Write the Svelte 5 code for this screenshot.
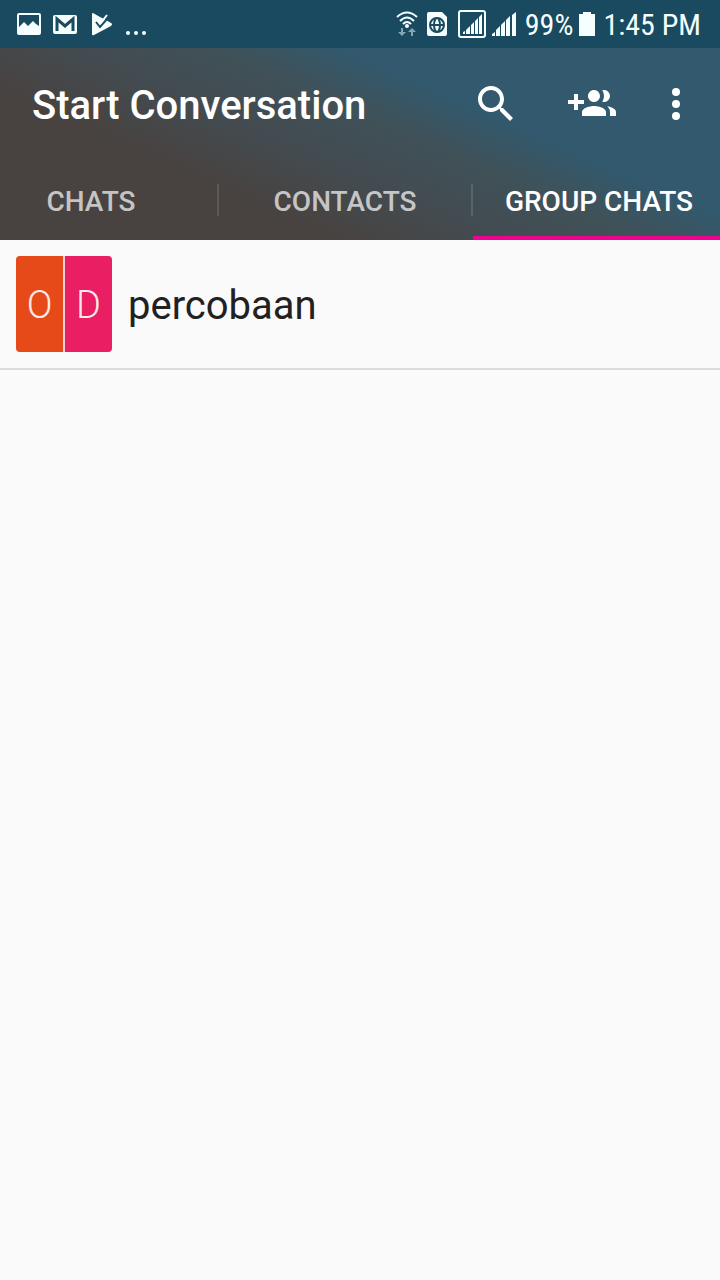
<script>
  let active = $state(2);
  const tabs = ['Chats', 'Contacts', 'Group chats'];
  const groups = [
    {
      name: 'percobaan',
      members: [
        { letter: 'O', color: '#e64a19' },
        { letter: 'D', color: '#e91e63' }
      ]
    }
  ];
</script>

<div class="screen">
  <div class="status">
    <div class="side notes">
      <svg width="24" height="24" viewBox="0 0 24 24" aria-hidden="true">
        <path fill-rule="evenodd" d="M2 1H22Q24 1 24 3V21Q24 23 22 23H2Q0 23 0 21V3Q0 1 2 1ZM2 3V15L7 10L11 14L16 9L19 12L22 14V3Z" />
      </svg>
      <svg width="24" height="24" viewBox="0 0 24 24" aria-hidden="true">
        <rect x="0" y="3" width="24" height="19" rx="2" />
        <path class="cut" d="M4 19V7L12 14L20 7V19" />
      </svg>
      <svg width="24" height="24" viewBox="0 0 24 24" aria-hidden="true">
        <path d="M4 1Q3 1 3 2V22Q3 24 5 23L22 14Q24 12 22 11L17 8L11 5Z" />
        <path class="cut thin" d="M7 10L11 15L18 7" />
        <path class="tick" d="M11 12L18 3" />
      </svg>
      <svg width="24" height="24" viewBox="0 0 24 24" aria-hidden="true">
        <circle cx="3" cy="21" r="2" /><circle cx="11" cy="21" r="2" /><circle cx="19" cy="21" r="2" />
      </svg>
    </div>
    <div class="side">
      <svg width="22" height="28" viewBox="0 0 22 28" aria-hidden="true">
        <g class="waves">
          <path d="M1 7Q11 -2 21 7" />
          <path d="M4 11Q11 4 18 11" />
          <path d="M7 14Q11 10 15 14" />
        </g>
        <circle cx="11" cy="16" r="2" />
        <path class="faint" d="M5 18H7V22H10L6 26L2 22H5ZM15 26H17V22H20L16 18L12 22H15Z" />
      </svg>
      <svg class="sim" width="22" height="28" viewBox="0 0 22 28" aria-hidden="true">
        <path d="M3 2H16L21 7V24Q21 26 19 26H3Q1 26 1 24V4Q1 2 3 2Z" />
        <g class="globe">
          <circle cx="11" cy="15" r="7" />
          <ellipse cx="11" cy="15" rx="3" ry="7" />
          <path d="M4 15H18" />
        </g>
      </svg>
      <svg class="boxed" width="28" height="28" viewBox="0 0 28 28" aria-hidden="true">
        <rect class="frame" x="1" y="1" width="26" height="26" rx="2" />
        <path d="M5 24V22L7 21V24ZM8 24V20L12 16V24ZM13 24V15L16 12V24ZM17 24V11L20 8V24ZM21 24V7L24 4V24Z" />
      </svg>
      <svg class="bars" width="24" height="28" viewBox="0 0 24 28" aria-hidden="true">
        <path d="M0 26V24L3 22V26ZM4 26V20L8 16V26ZM9 26V15L13 11V26ZM14 26V10L18 6V26ZM20 26V5L24 2V26Z" />
      </svg>
      <span class="percent">99%</span>
      <svg width="16" height="28" viewBox="0 0 16 28" aria-hidden="true">
        <path d="M4 2H12V4H16V26H0V4H4Z" />
      </svg>
      <span class="time">1:45 PM</span>
    </div>
  </div>

  <header>
    <div class="toolbar">
      <h1>Start Conversation</h1>
      <button class="icon" aria-label="Search">
        <svg width="48" height="48" viewBox="0 0 24 24"><path d="M15.500 14h-.79l-.28-.27C15.410 12.590 16 11.110 16 9.500 16 5.910 13.090 3 9.500 3S3 5.910 3 9.500 5.910 16 9.500 16c1.610 0 3.090-.59 4.230-1.570l.27.28v.79l5 4.990L20.490 19l-4.990-5zm-6 0C7.010 14 5 11.990 5 9.500S7.010 5 9.500 5 14 7.010 14 9.500 11.990 14 9.500 14z" /></svg>
      </button>
      <button class="icon add" aria-label="New group">
        <svg width="48" height="48" viewBox="0 0 24 24"><path d="M8 10H5V7H3v3H0v2h3v3h2v-3h3v-2zm10 1c1.660 0 2.990-1.340 2.990-3S19.660 5 18 5c-.32 0-.63.05-.91.14.57.81.9 1.790.9 2.860s-.34 2.040-.9 2.860c.28.09.59.14.91.14zm-5 0c1.660 0 2.990-1.340 2.990-3S14.660 5 13 5c-1.660 0-3 1.340-3 3s1.340 3 3 3zm6.620 2.160c.83.73 1.380 1.660 1.380 2.840v2h3v-2c0-1.540-2.370-2.490-4.380-2.840zM13 13c-2 0-6 1-6 3v2h12v-2c0-2-4-3-6-3z" /></svg>
      </button>
      <button class="icon more" aria-label="More options">
        <svg width="48" height="48" viewBox="0 0 24 24"><circle cx="12" cy="6" r="2" /><circle cx="12" cy="12" r="2" /><circle cx="12" cy="18" r="2" /></svg>
      </button>
    </div>
    <nav>
      {#each tabs as tab, i}
        <button class="tab" class:active={active === i} onclick={() => (active = i)}>{tab}</button>
        {#if i < tabs.length - 1}<span class="divider"></span>{/if}
      {/each}
    </nav>
  </header>

  <main>
    {#each groups as group}
      <button class="row">
        <span class="avatar">
          {#each group.members as m}
            <span class="half" style="background:{m.color}">{m.letter}</span>
          {/each}
        </span>
        <span class="name">{group.name}</span>
      </button>
    {/each}
  </main>
</div>

<style>
  :global(body) {
    margin: 0;
    background: #fafafa;
  }
  .screen {
    min-height: 100vh;
    background: #fafafa;
    font-family: Roboto, "Liberation Sans", sans-serif;
  }
  button {
    margin: 0;
    padding: 0;
    border: 0;
    background: none;
    color: inherit;
    font: inherit;
    cursor: pointer;
  }
  svg {
    display: block;
    flex: none;
    fill: currentColor;
  }
  .status {
    display: flex;
    justify-content: space-between;
    align-items: center;
    height: 48px;
    padding: 0 19px 0 17px;
    background: #194a60;
    color: #f6ffff;
    font-family: "Roboto Condensed", Roboto, sans-serif;
    font-size: 30px;
    line-height: 36px;
  }
  .side {
    display: flex;
    align-items: center;
  }
  .notes {
    gap: 12px;
  }
  .cut {
    fill: none;
    stroke: #194a60;
    stroke-width: 3;
  }
  .thin {
    stroke-width: 2;
  }
  .tick {
    fill: none;
    stroke: currentColor;
    stroke-width: 2;
  }
  .waves {
    fill: none;
    stroke: currentColor;
    stroke-width: 2;
  }
  .faint {
    opacity: 0.5;
  }
  .sim {
    margin-left: 8px;
  }
  .globe {
    fill: none;
    stroke: #194a60;
    stroke-width: 2;
  }
  .boxed {
    margin-left: 10px;
  }
  .frame {
    fill: none;
    stroke: currentColor;
    stroke-width: 2;
  }
  .bars {
    margin-left: 6px;
  }
  .percent {
    margin: 2px 6px 0 9px;
  }
  .time {
    margin: 2px 0 0 8px;
  }
  header {
    background: linear-gradient(24deg, #484341 30%, #434b50 43%, #405158 56%, #32596d 67%);
    color: #fff;
  }
  .toolbar {
    display: flex;
    align-items: center;
    height: 112px;
    padding: 0 20px 0 32px;
  }
  h1 {
    flex: 1;
    margin: 4px 0 0;
    font-size: 40px;
    line-height: 48px;
    font-weight: 500;
    white-space: nowrap;
  }
  .add {
    margin-left: 48px;
  }
  .more {
    margin-left: 36px;
  }
  nav {
    display: flex;
    align-items: center;
    height: 80px;
    margin-left: -35px;
    clip-path: inset(0);
  }
  .tab {
    flex: 1 0 252px;
    height: 80px;
    box-sizing: border-box;
    padding-top: 8px;
    border-bottom: 4px solid transparent;
    color: rgba(255, 255, 255, 0.7);
    font-size: 28px;
    line-height: 32px;
    font-weight: 500;
    text-transform: uppercase;
    white-space: nowrap;
  }
  .active {
    border-bottom-color: #ee0290;
    color: #fff;
  }
  .divider {
    flex: none;
    width: 2px;
    height: 32px;
    background: rgba(255, 255, 255, 0.12);
  }
  .row {
    display: flex;
    align-items: center;
    gap: 16px;
    width: 100%;
    padding: 16px;
    border-bottom: 2px solid #dcdcdc;
    text-align: left;
  }
  .avatar {
    display: flex;
    gap: 2px;
    width: 96px;
    height: 96px;
    border-radius: 4px;
    overflow: hidden;
    background: #fbd0d8;
  }
  .half {
    flex: 1;
    color: #fdeaea;
    font-size: 38px;
    line-height: 98px;
    font-weight: 300;
    text-align: center;
  }
  .name {
    padding-top: 4px;
    color: #212121;
    font-size: 40px;
    line-height: 48px;
  }
</style>
